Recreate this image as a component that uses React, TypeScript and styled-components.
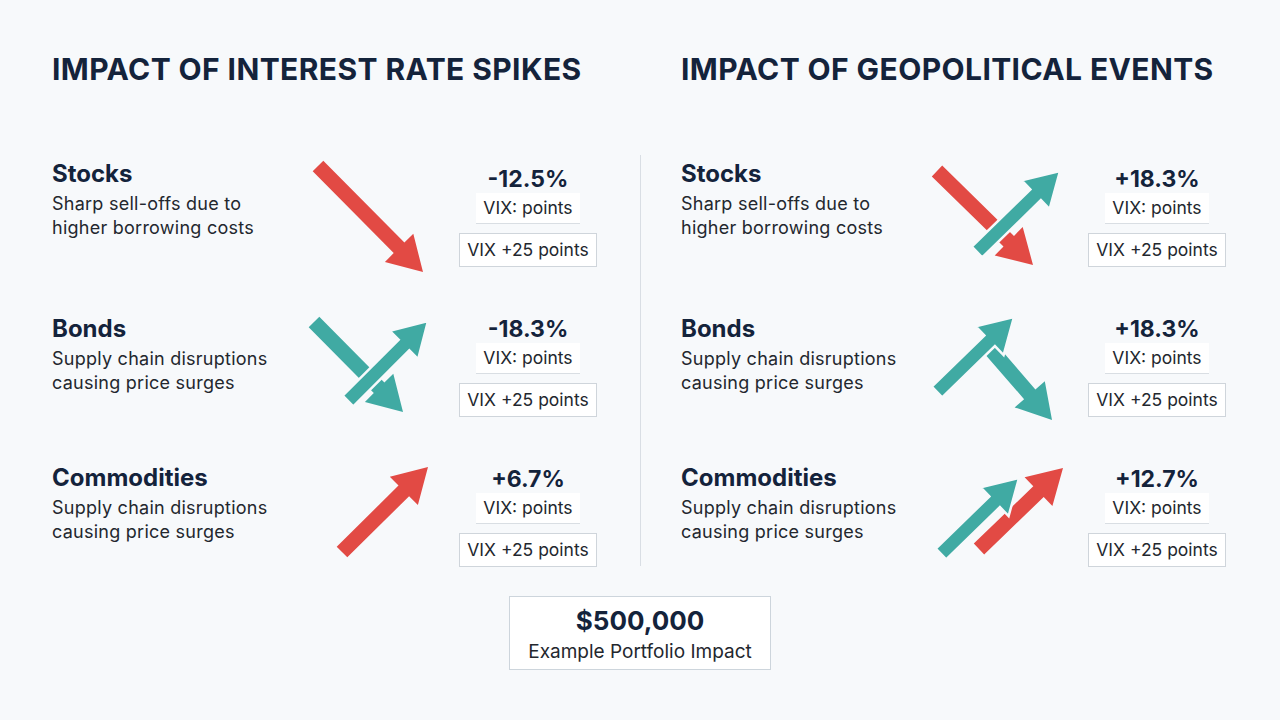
import React from "react";
import styled, { createGlobalStyle } from "styled-components";

const Global = createGlobalStyle`
  html, body { margin: 0; padding: 0; background: #f7f9fb; }
  body { font-family: Inter, "Noto Sans", "Liberation Sans", sans-serif; color: #14233b; }
`;

const RED = "#e24a44";
const TEAL = "#40aaa3";
const BG = "#f7f9fb";

const Page = styled.div`
  width: 1280px;
  height: 720px;
  box-sizing: border-box;
  padding-top: 51px;
  background: ${BG};
  display: flex;
  flex-direction: column;
`;

const Titles = styled.div`
  display: grid;
  grid-template-columns: 629px 1fr;
  padding-left: 52px;
`;

const Title = styled.h1`
  margin: 0;
  font-size: 30px;
  line-height: 36px;
  font-weight: 700;
  color: #14233b;
  letter-spacing: 0.4px;
`;

const Body = styled.div`
  display: flex;
  margin-top: 78px;
`;

const Panel = styled.div<{ $left: number; $width?: number }>`
  box-sizing: border-box;
  padding-left: ${(p) => p.$left}px;
  width: ${(p) => (p.$width ? `${p.$width}px` : "auto")};
  display: grid;
  grid-auto-rows: 107px;
  row-gap: 43px;
`;

const Divider = styled.div`
  width: 1px;
  background: #d9dee4;
  margin: -10px 0 6px;
`;

const Row = styled.div`
  display: grid;
  grid-template-columns: 248px 150px 156px;
  align-items: start;
`;

const TextCol = styled.div<{ $shift: number }>`
  margin-top: ${(p) => p.$shift}px;
`;

const Label = styled.div`
  font-size: 24px;
  line-height: 28px;
  font-weight: 700;
  color: #14233b;
`;

const Desc = styled.div`
  margin-top: 4px;
  font-size: 18px;
  line-height: 24px;
  letter-spacing: 0.25px;
  color: #23272e;
`;

const ArrowSvg = styled.svg`
  overflow: visible;
  display: block;
`;

const ValueCol = styled.div`
  display: flex;
  flex-direction: column;
  align-items: center;
`;

const Value = styled.div`
  font-size: 23px;
  line-height: 28px;
  font-weight: 700;
  color: #14233b;
`;

const VixPoints = styled.div`
  box-sizing: border-box;
  height: 31px;
  padding: 0 7px;
  background: #ffffff;
  border-bottom: 1px solid #d9dee3;
  font-size: 17.5px;
  line-height: 30px;
  color: #23272e;
`;

const VixBox = styled.div`
  box-sizing: border-box;
  margin-top: 9px;
  height: 34px;
  padding: 0 7px;
  background: #ffffff;
  border: 1px solid #cfd5db;
  font-size: 17.5px;
  line-height: 32px;
  color: #23272e;
`;

const Summary = styled.div`
  align-self: center;
  margin-top: 24px;
  box-sizing: border-box;
  width: 262px;
  height: 74px;
  padding-top: 8px;
  background: #ffffff;
  border: 1px solid #cdd5dc;
  display: flex;
  flex-direction: column;
  align-items: center;
`;

const SummaryValue = styled.div`
  font-size: 26px;
  line-height: 32px;
  font-weight: 700;
  color: #14233b;
`;

const SummaryLabel = styled.div`
  margin-top: 3px;
  font-size: 19px;
  line-height: 24px;
  color: #23272e;
`;

type ArrowDef = { from: [number, number]; to: [number, number]; color: string; outline?: boolean };

function arrowPoints(from: [number, number], to: [number, number], w = 15, L = 34, W = 40) {
  const dx = to[0] - from[0];
  const dy = to[1] - from[1];
  const len = Math.hypot(dx, dy);
  const ux = dx / len;
  const uy = dy / len;
  const nx = -uy;
  const ny = ux;
  const bx = to[0] - ux * L;
  const by = to[1] - uy * L;
  const pts: [number, number][] = [
    [from[0] + (nx * w) / 2, from[1] + (ny * w) / 2],
    [bx + (nx * w) / 2, by + (ny * w) / 2],
    [bx + (nx * W) / 2, by + (ny * W) / 2],
    [to[0], to[1]],
    [bx - (nx * W) / 2, by - (ny * W) / 2],
    [bx - (nx * w) / 2, by - (ny * w) / 2],
    [from[0] - (nx * w) / 2, from[1] - (ny * w) / 2],
  ];
  return pts.map((p) => `${p[0].toFixed(1)},${p[1].toFixed(1)}`).join(" ");
}

const Arrows: React.FC<{ arrows: ArrowDef[] }> = ({ arrows }) => (
  <ArrowSvg width={150} height={107} viewBox="0 0 150 107">
    {arrows.map((a, i) => (
      <polygon
        key={i}
        points={arrowPoints(a.from, a.to)}
        fill={a.color}
        stroke={a.outline ? BG : "none"}
        strokeWidth={a.outline ? 2.5 : 0}
        strokeLinejoin="miter"
      />
    ))}
  </ArrowSvg>
);

type RowDef = { label: string; desc: [string, string]; value: string; shift: number; arrows: ArrowDef[] };

const leftRows: RowDef[] = [
  {
    label: "Stocks",
    desc: ["Sharp sell-offs due to", "higher borrowing costs"],
    value: "-12.5%",
    shift: -5,
    arrows: [{ from: [18, 1], to: [123, 107], color: RED }],
  },
  {
    label: "Bonds",
    desc: ["Supply chain disruptions", "causing price surges"],
    value: "-18.3%",
    shift: 0,
    arrows: [
      { from: [14, 7], to: [103, 97], color: TEAL },
      { from: [48, 86], to: [128, 6], color: TEAL, outline: true },
    ],
  },
  {
    label: "Commodities",
    desc: ["Supply chain disruptions", "causing price surges"],
    value: "+6.7%",
    shift: -1,
    arrows: [{ from: [42, 87], to: [128, 2], color: RED }],
  },
];

const rightRows: RowDef[] = [
  {
    label: "Stocks",
    desc: ["Sharp sell-offs due to", "higher borrowing costs"],
    value: "+18.3%",
    shift: -5,
    arrows: [
      { from: [8, 6], to: [104, 100], color: RED },
      { from: [48, 87], to: [131, 6], color: TEAL, outline: true },
    ],
  },
  {
    label: "Bonds",
    desc: ["Supply chain disruptions", "causing price surges"],
    value: "+18.3%",
    shift: 0,
    arrows: [
      { from: [58, 30], to: [123, 105], color: TEAL },
      { from: [8, 77], to: [85, 2], color: TEAL, outline: true },
    ],
  },
  {
    label: "Commodities",
    desc: ["Supply chain disruptions", "causing price surges"],
    value: "+12.7%",
    shift: -1,
    arrows: [
      { from: [50, 84], to: [134, 3], color: RED },
      { from: [12, 89], to: [90, 13], color: TEAL, outline: true },
    ],
  },
];

const ImpactRow: React.FC<{ row: RowDef }> = ({ row }) => (
  <Row>
    <TextCol $shift={row.shift}>
      <Label>{row.label}</Label>
      <Desc>
        {row.desc[0]}
        <br />
        {row.desc[1]}
      </Desc>
    </TextCol>
    <Arrows arrows={row.arrows} />
    <ValueCol>
      <Value>{row.value}</Value>
      <VixPoints>VIX: points</VixPoints>
      <VixBox>VIX +25 points</VixBox>
    </ValueCol>
  </Row>
);

export default function App() {
  return (
    <>
      <Global />
      <Page>
        <Titles>
          <Title>IMPACT OF INTEREST RATE SPIKES</Title>
          <Title>IMPACT OF GEOPOLITICAL EVENTS</Title>
        </Titles>
        <Body>
          <Panel $left={52} $width={640}>
            {leftRows.map((r, i) => (
              <ImpactRow key={i} row={r} />
            ))}
          </Panel>
          <Divider />
          <Panel $left={40}>
            {rightRows.map((r, i) => (
              <ImpactRow key={i} row={r} />
            ))}
          </Panel>
        </Body>
        <Summary>
          <SummaryValue>$500,000</SummaryValue>
          <SummaryLabel>Example Portfolio Impact</SummaryLabel>
        </Summary>
      </Page>
    </>
  );
}
